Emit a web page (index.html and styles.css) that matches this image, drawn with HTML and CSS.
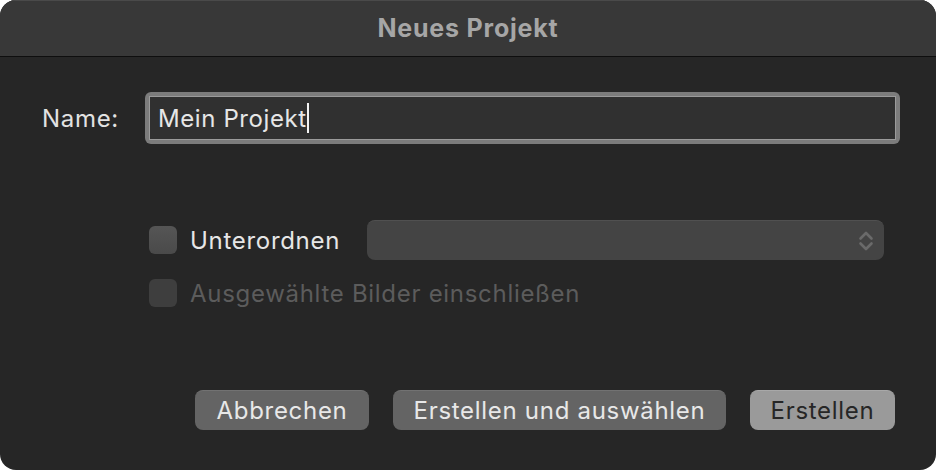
FILE: index.html
```html
<!DOCTYPE html>
<html lang="de">
<head>
<meta charset="utf-8">
<title>Neues Projekt</title>
<link rel="stylesheet" href="styles.css">
</head>
<body>
<div class="window">
  <div class="titlebar">Neues Projekt</div>
  <div class="content">
    <div class="name-row">
      <label class="name-label">Name:</label>
      <div class="field-ring">
        <div class="field"><span class="field-text">Mein Projekt</span><span class="caret"></span></div>
      </div>
    </div>
    <div class="options">
      <div class="opt-row">
        <span class="checkbox"></span>
        <span class="opt-label">Unterordnen</span>
        <div class="popup">
          <svg class="chev" width="16" height="24" viewBox="0 0 16 24"><path d="M2.5 9.5 L8 4 L13.5 9.5 M2.5 14.5 L8 20 L13.5 14.5" fill="none" stroke="#6a6a6a" stroke-width="2.6" stroke-linecap="round" stroke-linejoin="round"/></svg>
        </div>
      </div>
      <div class="opt-row disabled">
        <span class="checkbox"></span>
        <span class="opt-label">Ausgewählte Bilder einschließen</span>
      </div>
    </div>
    <div class="buttons">
      <button class="btn btn-cancel">Abbrechen</button>
      <button class="btn btn-select">Erstellen und auswählen</button>
      <button class="btn btn-default">Erstellen</button>
    </div>
  </div>
</div>
</body>
</html>
```
FILE: styles.css
```css
html, body {
  margin: 0;
  padding: 0;
  background: #ffffff;
}
body {
  width: 936px;
  height: 470px;
  font-family: Inter, "Noto Sans", "Liberation Sans", sans-serif;
  -webkit-font-smoothing: antialiased;
}
.window {
  width: 936px;
  height: 470px;
  border-radius: 16px;
  overflow: hidden;
  background: #262626;
  display: flex;
  flex-direction: column;
}
.titlebar {
  background: #383838;
  border-top: 1px solid #4a4a4a;
  box-sizing: border-box;
  border-bottom: 1px solid #0e0e0e;
  height: 57px;
  color: #a6a6a6;
  font-size: 25px;
  font-weight: 700;
  letter-spacing: 0.8px;
  display: flex;
  align-items: center;
  justify-content: center;
  padding-bottom: 2px;
}
.content {
  flex: 1;
  display: flex;
  flex-direction: column;
  padding: 35px 0 0 0;
}
.name-row {
  display: flex;
  align-items: center;
}
.name-label {
  width: 119px;
  text-align: right;
  color: #e2e2e2;
  font-size: 24px;
  letter-spacing: 0.7px;
  margin-right: 26px;
}
.field-ring {
  width: 755px;
  height: 52px;
  box-sizing: border-box;
  background: #7c7c7c;
  border-radius: 6px;
  padding: 4px;
}
.field {
  height: 100%;
  box-sizing: border-box;
  background: #303030;
  border: 1px solid #9a9a9a;
  display: flex;
  align-items: center;
  padding-left: 8px;
}
.field-text {
  color: #e6e6e6;
  font-size: 24px;
  letter-spacing: 0.6px;
}
.caret {
  display: inline-block;
  width: 2px;
  height: 30px;
  background: #f2f2f2;
  margin-left: 0;
}
.options {
  margin-top: 76px;
  margin-left: 149px;
  display: flex;
  flex-direction: column;
  gap: 19px;
}
.opt-row {
  display: flex;
  align-items: center;
  height: 40px;
}
.opt-row.disabled {
  height: 28px;
}
.checkbox {
  width: 28px;
  height: 28px;
  border-radius: 6px;
  background: linear-gradient(#555555, #4a4a4a);
  box-sizing: border-box;
  flex: none;
}
.disabled .checkbox {
  background: #3e3e3e;
}
.opt-label {
  margin-left: 13px;
  font-size: 24px;
  letter-spacing: 0.7px;
  color: #e6e6e6;
}
.disabled .opt-label {
  color: #5c5c5c;
}
.popup {
  margin-left: 27px;
  width: 517px;
  height: 40px;
  border-radius: 8px;
  background: #444444;
  border-top: 1px solid #505050;
  box-sizing: border-box;
  display: flex;
  align-items: center;
  justify-content: flex-end;
  padding-right: 10px;
}
.buttons {
  margin-top: auto;
  margin-bottom: 40px;
  display: flex;
  justify-content: flex-end;
  padding-right: 41px;
  gap: 24px;
}
.btn {
  height: 40px;
  border: none;
  border-radius: 8px;
  font-family: inherit;
  font-size: 24px;
  letter-spacing: 0.7px;
  color: #e8e8e8;
  background: #646464;
  padding: 0;
  border-top: 1px solid #727272;
}
.btn-cancel { width: 174px; }
.btn-select { width: 333px; }
.btn-default {
  width: 145px;
  background: #9a9a9a;
  color: #262626;
  border-top: 1px solid #a8a8a8;
}
```
